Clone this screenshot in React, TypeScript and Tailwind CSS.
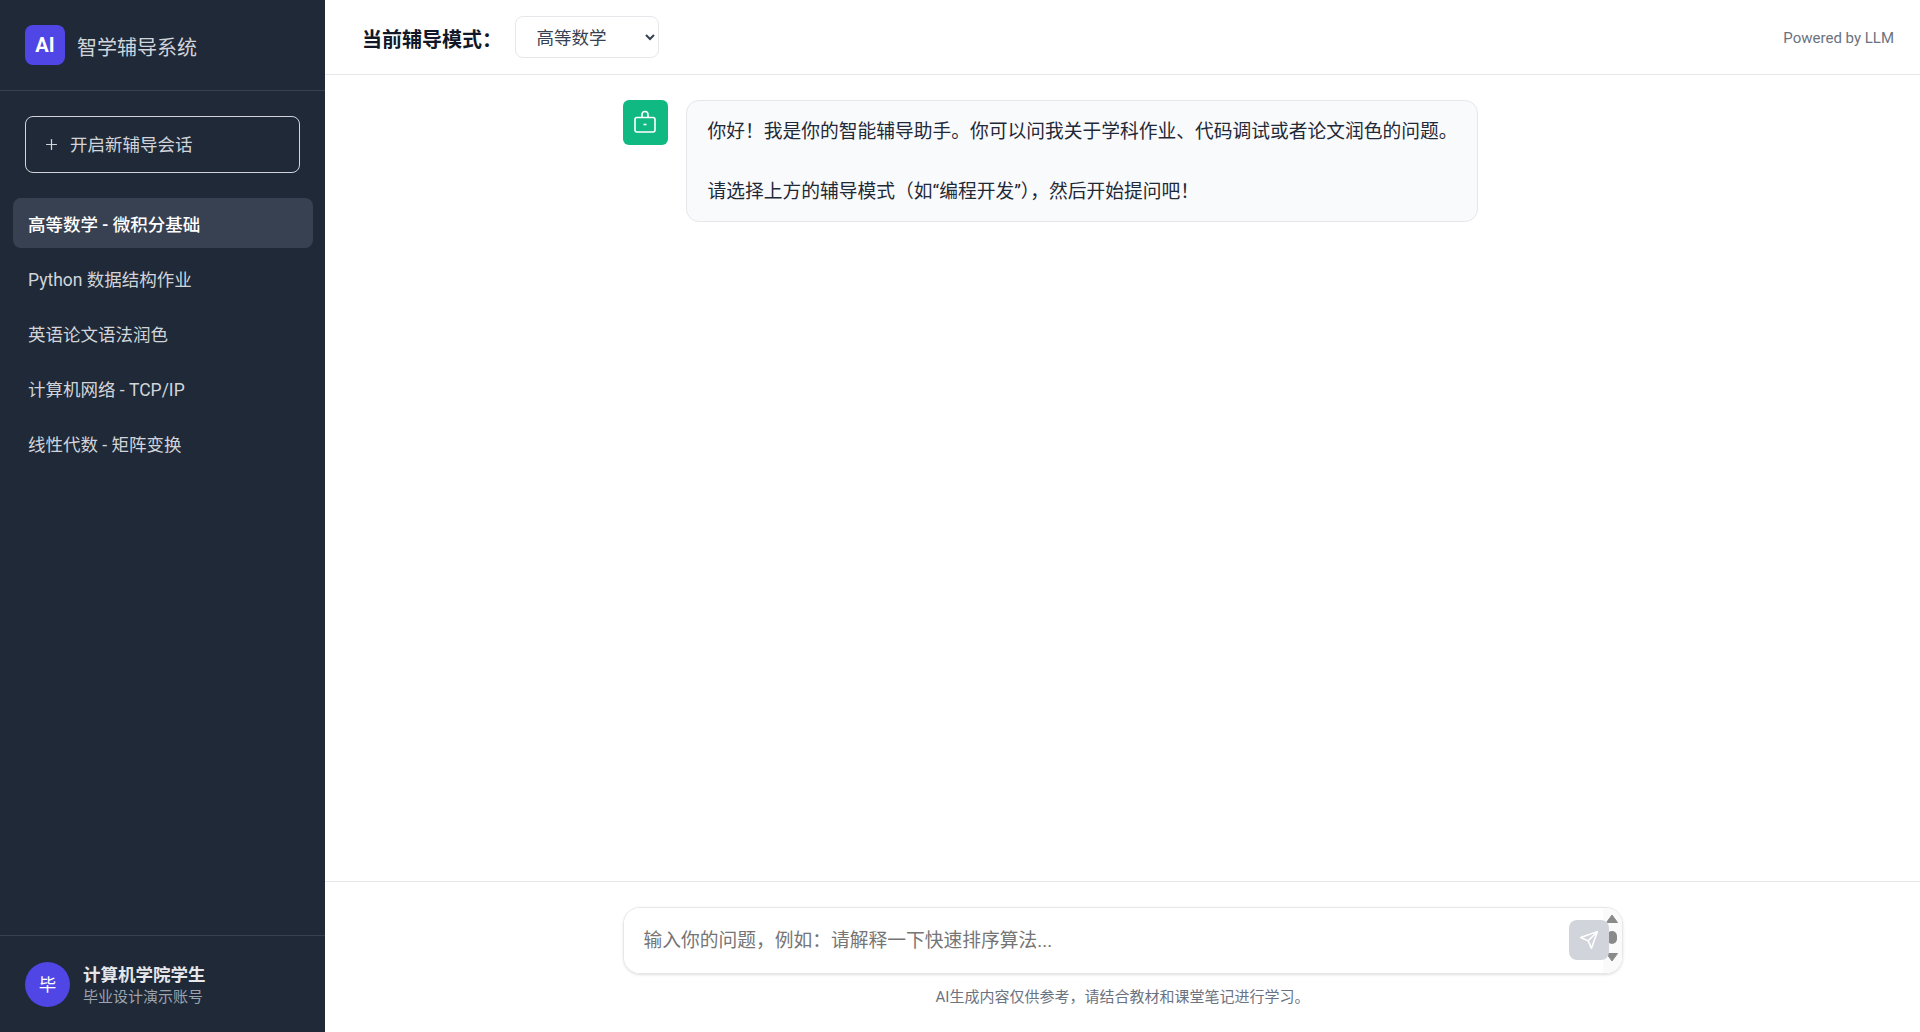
import { Plus } from "lucide-react";

const SESSIONS = [
  { title: "高等数学 - 微积分基础", active: true },
  { title: "Python 数据结构作业" },
  { title: "英语论文语法润色" },
  { title: "计算机网络 - TCP/IP" },
  { title: "线性代数 - 矩阵变换" },
];

// full-width punctuation, as in the reference
const GREETING =
  "你好\uFF01我是你的智能辅导助手。你可以问我关于学科作业、代码调试或者论文润色的问题。\n\n请选择上方的辅导模式\uFF08如“编程开发”\uFF09\uFF0C然后开始提问吧\uFF01";
const PLACEHOLDER = "输入你的问题\uFF0C例如\uFF1A请解释一下快速排序算法...";
const DISCLAIMER = "AI生成内容仅供参考\uFF0C请结合教材和课堂笔记进行学习。";

function BotIcon() {
  return (
    <svg width="24" height="26" viewBox="0 0 24 26" fill="none" stroke="white" strokeWidth="1.6" strokeLinejoin="round">
      <path d="M9 7.5V4.5a3 3 0 0 1 6 0V7.5" />
      <rect x="2" y="7.5" width="20" height="14.5" rx="2" />
      <path d="M10.5 14.5h3" />
    </svg>
  );
}

function SendIcon() {
  return (
    <svg width="20" height="20" viewBox="0 0 24 24" fill="none" stroke="white" strokeWidth="1.8" strokeLinecap="round" strokeLinejoin="round">
      <polygon points="22 2 15 22 11 13 2 9 22 2" />
      <line x1="22" y1="2" x2="11" y2="13" />
    </svg>
  );
}

/* the textarea's scrollbar shows in the reference, partly under the send button */
function FakeScrollbar() {
  return (
    <div className="absolute right-0 top-0 bottom-0 flex w-[19px] flex-col items-center bg-[#fafafa] pr-px pt-[6px]">
      <svg width="12" height="9" viewBox="0 0 12 9" className="fill-[#8a8a8a]" stroke="#8a8a8a" strokeWidth="1" strokeLinejoin="round">
        <path d="M6 1 11.5 8.5H.5z" />
      </svg>
      <div className="mt-[8px] h-[13px] w-[10px] rounded-[5px] bg-[#8a8a8a]" />
      <svg width="12" height="9" viewBox="0 0 12 9" className="mt-[9px] fill-[#8a8a8a]" stroke="#8a8a8a" strokeWidth="1" strokeLinejoin="round">
        <path d="M.5.5h11L6 8z" />
      </svg>
    </div>
  );
}

function Sidebar() {
  return (
    <aside className="flex h-full w-[325px] shrink-0 flex-col bg-[#1f2937]">
      <div className="flex h-[91px] shrink-0 items-center gap-[12px] border-b border-[#374151] px-[25px]">
        <div className="flex h-10 w-10 items-center justify-center rounded-lg bg-[#4f46e5] text-[20px] font-bold text-white">
          AI
        </div>
        <span className="pt-[5px] text-[20px] leading-[28px] text-[#d1d5db]">智学辅导系统</span>
      </div>

      <div className="px-[25px] pt-[25px]">
        <button className="flex h-[57px] w-full items-center gap-[10px] rounded-lg border border-[#d1d5db] pl-[17px] text-[17.5px] text-[#d1d5db]">
          <Plus size={17} strokeWidth={1.75} />
          <span className="pt-[2px]">开启新辅导会话</span>
        </button>
      </div>

      <nav className="flex flex-col gap-[5px] pl-[13px] pr-[12px] pt-[25px]">
        {SESSIONS.map((s) => (
          <div
            key={s.title}
            className={
              s.active
                ? "flex h-[50px] items-center rounded-lg bg-[#374151] px-[15px] pt-[5px] text-[17.5px] font-medium text-white"
                : "flex h-[50px] items-center rounded-lg px-[15px] pt-[5px] text-[17.5px] text-[#d1d5db]"
            }
          >
            {s.title}
          </div>
        ))}
      </nav>

      <div className="mt-auto flex h-[97px] shrink-0 items-center gap-[13px] border-t border-[#374151] px-[25px]">
        <div className="flex h-[45px] w-[45px] items-center justify-center rounded-full bg-[#4f46e5] pt-[3px] text-[17.5px] text-white">
          毕
        </div>
        <div className="flex flex-col pt-[3px]">
          <span className="text-[17.5px] leading-[24px] font-semibold text-[#e5e7eb]">计算机学院学生</span>
          <span className="text-[15px] leading-[21px] text-[#9ca3af]">毕业设计演示账号</span>
        </div>
      </div>
    </aside>
  );
}

export default function App() {
  return (
    <div className="flex h-screen w-full overflow-hidden bg-white font-['Roboto','Noto_Sans_CJK_SC',sans-serif]">
      <Sidebar />
      <main className="flex h-full min-w-0 flex-1 flex-col">
        <header className="flex h-[75px] shrink-0 items-center justify-between border-b border-[#e5e7eb] pl-[37px] pr-[26px]">
          <div className="flex items-center gap-[12.5px]">
            <span className="pt-[5px] text-[20px] font-bold text-[#111827]">{"当前辅导模式\uFF1A"}</span>
            <select className="h-[42px] w-[144px] rounded-lg border border-[#e5e7eb] bg-white pl-[17px] pt-[2px] text-[17.5px] text-[#374151]">
              <option>高等数学</option>
              <option>编程开发</option>
              <option>论文润色</option>
            </select>
          </div>
          <span className="pt-[2px] text-[15px] text-[#6b7280]">Powered by LLM</span>
        </header>

        <section className="flex flex-1 justify-center pt-[25px]">
          <div className="flex w-[1000px] items-start gap-[18px]">
            <div className="flex h-[45px] w-[45px] shrink-0 items-center justify-center rounded-md bg-[#10b981]">
              <BotIcon />
            </div>
            <div className="w-[792px] whitespace-pre-wrap rounded-[13px] border border-[#e5e7eb] bg-[#f9fafb] pb-[14px] pl-[21px] pr-[12px] pt-[16px] text-[18.75px] leading-[30px] text-[#1f2937]">
              {GREETING}
            </div>
          </div>
        </section>

        <footer className="flex h-[151px] shrink-0 flex-col items-center border-t border-[#e5e7eb] pt-[25px]">
          <div className="relative h-[67px] w-[1000px] overflow-hidden rounded-[17px] border border-[#e5e7eb] shadow-sm">
            <textarea
              readOnly
              rows={1}
              placeholder={PLACEHOLDER}
              className="h-full w-full resize-none overflow-hidden bg-white pb-[17px] pl-[20px] pr-[60px] pt-[19px] text-[18.75px] leading-[28px] text-[#1f2937] outline-none placeholder:text-[#757575]"
            />
            <FakeScrollbar />
            <button className="absolute right-[13px] top-[12px] flex h-10 w-10 items-center justify-center rounded-lg bg-[#d1d5db]">
              <SendIcon />
            </button>
          </div>
          <p className="mt-[12px] text-[15px] leading-[22px] text-[#6b7280]">{DISCLAIMER}</p>
        </footer>
      </main>
    </div>
  );
}
